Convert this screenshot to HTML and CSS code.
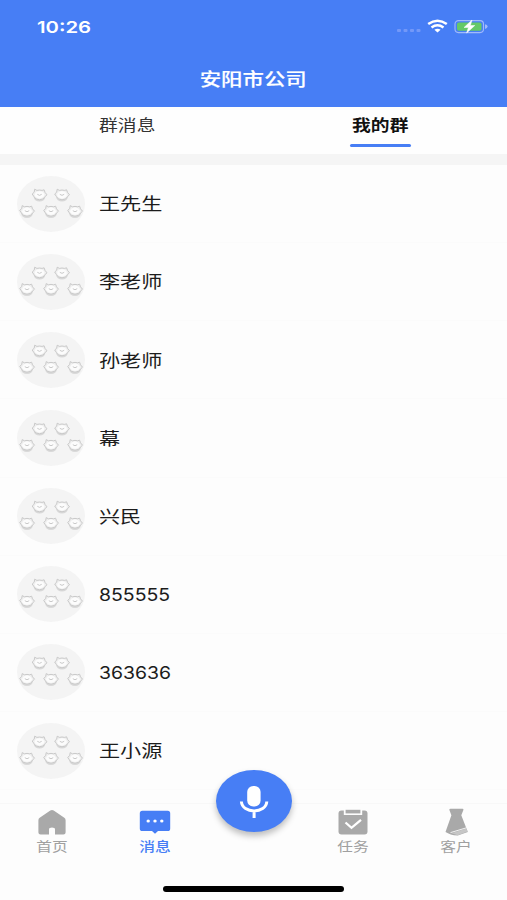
FILE: index.html
```
<!DOCTYPE html>
<html lang="zh-CN">
<head>
<meta charset="utf-8">
<title>安阳市公司</title>
<link rel="stylesheet" href="styles.css">
</head>
<body>
<svg width="0" height="0" class="defs" aria-hidden="true">
  <defs>
    <g id="face">
      <ellipse cx="0" cy="2.2" rx="5.8" ry="4.6" fill="#d8d8d8"/>
      <path d="M-7.3-.8-5.3-2.6-4.8-5.6-2.6-4.4Q0-5.2 2.6-4.4L4.6-5 5.5-2.4 7.5 0 5.7 1.6Q4.4 5 0 5-4.4 5-5.7 1.6Z" fill="#f0f0f0" stroke="#c9c9c9" stroke-width="1"/>
      <ellipse cx="0" cy="0" rx="4.8" ry="3.6" fill="#fcfcfc"/>
      <path d="M-2.2-.5Q0 1.6 2.2-.5" fill="none" stroke="#c4c4c4" stroke-width=".9"/>
    </g>
    <g id="group">
      <ellipse cx="34" cy="28" rx="34" ry="28" fill="#f4f4f4"/>
      <use href="#face" x="22.5" y="18.8"/>
      <use href="#face" x="45" y="18.8"/>
      <use href="#face" x="10" y="35.2"/>
      <use href="#face" x="34" y="35.2"/>
      <use href="#face" x="58" y="35.2"/>
    </g>
  </defs>
</svg>
<div class="app">
  <header class="header">
    <div class="status">
      <span class="time">10:26</span>
      <svg class="status-icons" width="92" height="18" viewBox="0 0 92 18">
        <g fill="#7398f8"><rect x="0" y="11" width="4" height="3" rx="1"/><rect x="6.5" y="11" width="4" height="3" rx="1"/><rect x="13" y="11" width="4" height="3" rx="1"/><rect x="19.5" y="11" width="4" height="3" rx="1"/></g>
        <g fill="none" stroke="#fff" stroke-width="2.5"><path d="M31.2 6.1Q40.5-.7 49.8 6.1"/><path d="M34.5 9.4Q40.5 5 46.5 9.4"/></g>
        <path d="M37.4 11.8Q40.5 9.5 43.6 11.8L40.5 14.6Z" fill="#fff"/>
        <rect x="58" y="2.6" width="28.5" height="12" rx="3.5" fill="none" stroke="#a1bafa" stroke-width="1.1"/>
        <rect x="60" y="4.4" width="24.5" height="8.4" rx="1.8" fill="#65c967"/>
        <path d="M88 6.3Q90.6 6.8 90.6 8.6T88 10.9Z" fill="#a1bafa"/>
        <path d="M75 2 67 9.5H71.4L69.6 15 77.8 7.5H73.4Z" fill="#fff" stroke="#fff" stroke-width=".5"/>
      </svg>
    </div>
    <h1 class="title"><span class="wide">安阳市公司</span></h1>
  </header>
  <nav class="tabs">
    <a class="tab"><span class="wide">群消息</span></a>
    <a class="tab active"><span class="wide">我的群</span></a>
  </nav>
  <main class="list">
    <div class="row"><svg class="avatar" viewBox="0 0 68 56"><use href="#group"/></svg><span class="name">王先生</span></div>
    <div class="row"><svg class="avatar" viewBox="0 0 68 56"><use href="#group"/></svg><span class="name">李老师</span></div>
    <div class="row"><svg class="avatar" viewBox="0 0 68 56"><use href="#group"/></svg><span class="name">孙老师</span></div>
    <div class="row"><svg class="avatar" viewBox="0 0 68 56"><use href="#group"/></svg><span class="name">幕</span></div>
    <div class="row"><svg class="avatar" viewBox="0 0 68 56"><use href="#group"/></svg><span class="name">兴民</span></div>
    <div class="row"><svg class="avatar" viewBox="0 0 68 56"><use href="#group"/></svg><span class="name digits">855555</span></div>
    <div class="row"><svg class="avatar" viewBox="0 0 68 56"><use href="#group"/></svg><span class="name digits">363636</span></div>
    <div class="row"><svg class="avatar" viewBox="0 0 68 56"><use href="#group"/></svg><span class="name">王小源</span></div>
  </main>
  <footer class="bottom">
    <div class="nav">
      <a class="item">
        <svg width="32" height="28" viewBox="0 0 32 28"><path d="M14.3 2.6Q16 1.4 17.7 2.6L28.3 9.7Q29.6 10.6 29.6 12.2V24.4Q29.6 26.4 27.4 26.4H19V21.4Q19 19.5 16 19.5T13 21.4V26.4H4.6Q2.4 26.4 2.4 24.4V12.2Q2.4 10.6 3.7 9.7Z" fill="#a9a9a9"/></svg>
        <span class="wide">首页</span>
      </a>
      <a class="item on">
        <svg width="32" height="28" viewBox="0 0 32 28"><path d="M3.3 2.7H28.7Q31.2 2.7 31.2 5.2V20.4Q31.2 23 28.7 23H19L16 25.8 13 23H3.3Q.8 23 .8 20.4V5.2Q.8 2.7 3.3 2.7Z" fill="#477ef5"/><g fill="#fff"><ellipse cx="9.2" cy="13" rx="1.7" ry="1.5"/><ellipse cx="16" cy="13" rx="1.7" ry="1.5"/><ellipse cx="22.8" cy="13" rx="1.7" ry="1.5"/></g></svg>
        <span class="wide">消息</span>
      </a>
      <a class="mic" aria-label="语音">
        <svg width="76" height="62" viewBox="0 0 76 62"><rect x="31.2" y="16" width="13.4" height="20.5" rx="6" fill="#fff"/><path d="M25.4 31.5C26 44 50.2 44 50.8 31.5M38.1 40.5V48" fill="none" stroke="#fff" stroke-width="3"/></svg>
      </a>
      <a class="item">
        <svg width="32" height="28" viewBox="0 0 32 28"><rect x="1.5" y="2.6" width="29" height="23.8" rx="3" fill="#a9a9a9"/><path d="M6.8 1V7H25.2V1Z" fill="#fdfdfd"/><rect x="8.6" y="1.8" width="14.8" height="3.6" fill="#a9a9a9"/><path d="M8.5 14.5 14.5 19.8 24 11.8" fill="none" stroke="#fff" stroke-width="2.3"/></svg>
        <span class="wide">任务</span>
      </a>
      <a class="item">
        <svg width="32" height="28" viewBox="0 0 32 28"><path d="M10.5.8H22.5Q23.8.8 23.4 2L21.3 7.2 27.8 24 17.7 27.6Q10 27 5.5 24L11.4 7.2 9.4 2Q9 .8 10.5.8Z" fill="#a9a9a9"/><path d="M11.5 25.3 26.4 20.4 27.6 23.6 17.7 27.2Z" fill="#c6c6c6"/><path d="M10.5 24.6 26.4 19.8" fill="none" stroke="#f2f2f2" stroke-width="1"/></svg>
        <span class="wide">客户</span>
      </a>
    </div>
    <div class="home-bar"></div>
  </footer>
</div>
</body>
</html>
```

FILE: styles.css
```
* { box-sizing: border-box; }
body {
  margin: 0;
  background: #fdfdfd;
  font-family: "Liberation Sans", "Noto Sans CJK SC", sans-serif;
  color: #1c1c1c;
}
.defs { display: block; width: 0; height: 0; }
.app {
  width: 507px;
  height: 900px;
  display: flex;
  flex-direction: column;
  overflow: hidden;
}
.wide { display: inline-block; transform: scaleX(1.21); }

.header {
  height: 107px;
  flex: none;
  background: #477ef5;
  color: #fff;
}
.status {
  height: 53px;
  padding: 0 18px 0 37px;
  display: flex;
  align-items: center;
  justify-content: space-between;
}
.time {
  font: 600 16.5px/20px Inter, sans-serif;
  transform: scaleX(1.23);
  transform-origin: left;
}
.title {
  margin: 0;
  height: 54px;
  font-size: 17.7px;
  font-weight: 500;
  line-height: 54px;
  text-align: center;
  -webkit-text-stroke: .15px currentColor;
}

.tabs {
  height: 58px;
  flex: none;
  display: grid;
  grid-template-columns: 1fr 1fr;
  background: #fefefe;
  border-bottom: 11px solid #f5f5f5;
}
.tab {
  display: flex;
  flex-direction: column;
  align-items: center;
  padding-left: 1px;
  font-size: 15.5px;
  line-height: 38px;
  color: #333;
}
.tab.active { padding-left: 0; color: #111; font-weight: 700; line-height: 37px; }
.tab.active::after {
  content: "";
  width: 61px;
  height: 3px;
  border-radius: 2px;
  background: #477ef5;
}

.list { flex: none; height: 638px; }
.row {
  height: 78.15px;
  padding-left: 17px;
  display: flex;
  align-items: center;
  gap: 14px;
  border-bottom: 1px solid #fbfbfb;
}
.avatar { width: 68px; height: 56px; flex: none; }
.name {
  padding-top: 1.5px;
  font-size: 17.6px;
  line-height: 24px;
  transform: scaleX(1.2);
  transform-origin: left;
}
.name.digits { margin-left: -.5px; font-family: Inter, sans-serif; font-size: 17.2px; transform: scaleX(1.13); }

.bottom {
  flex: none;
  height: 97px;
  border-top: 1px solid #f8f8f8;
  background: #fdfdfd;
}
.nav {
  height: 82px;
  display: grid;
  grid-template-columns: 103px 103px 95px 103px 103px;
}
.item {
  padding-top: 4px;
  display: flex;
  flex-direction: column;
  align-items: center;
  font-size: 13px;
  line-height: 18px;
  color: #a0a0a0;
}
.item svg { margin-bottom: 2px; }
.item .wide { padding-left: 1px; }
.item.on { color: #477ef5; font-weight: 500; }
.mic {
  justify-self: center;
  width: 76px;
  height: 62px;
  margin-top: -34px;
  border-radius: 50%;
  background: #477ef5;
  box-shadow: 0 4px 6px rgba(0, 0, 0, .25);
}
.mic svg { display: block; }
.home-bar {
  width: 181px;
  height: 6px;
  margin: 0 auto;
  border-radius: 3px;
  background: #000;
}
```
